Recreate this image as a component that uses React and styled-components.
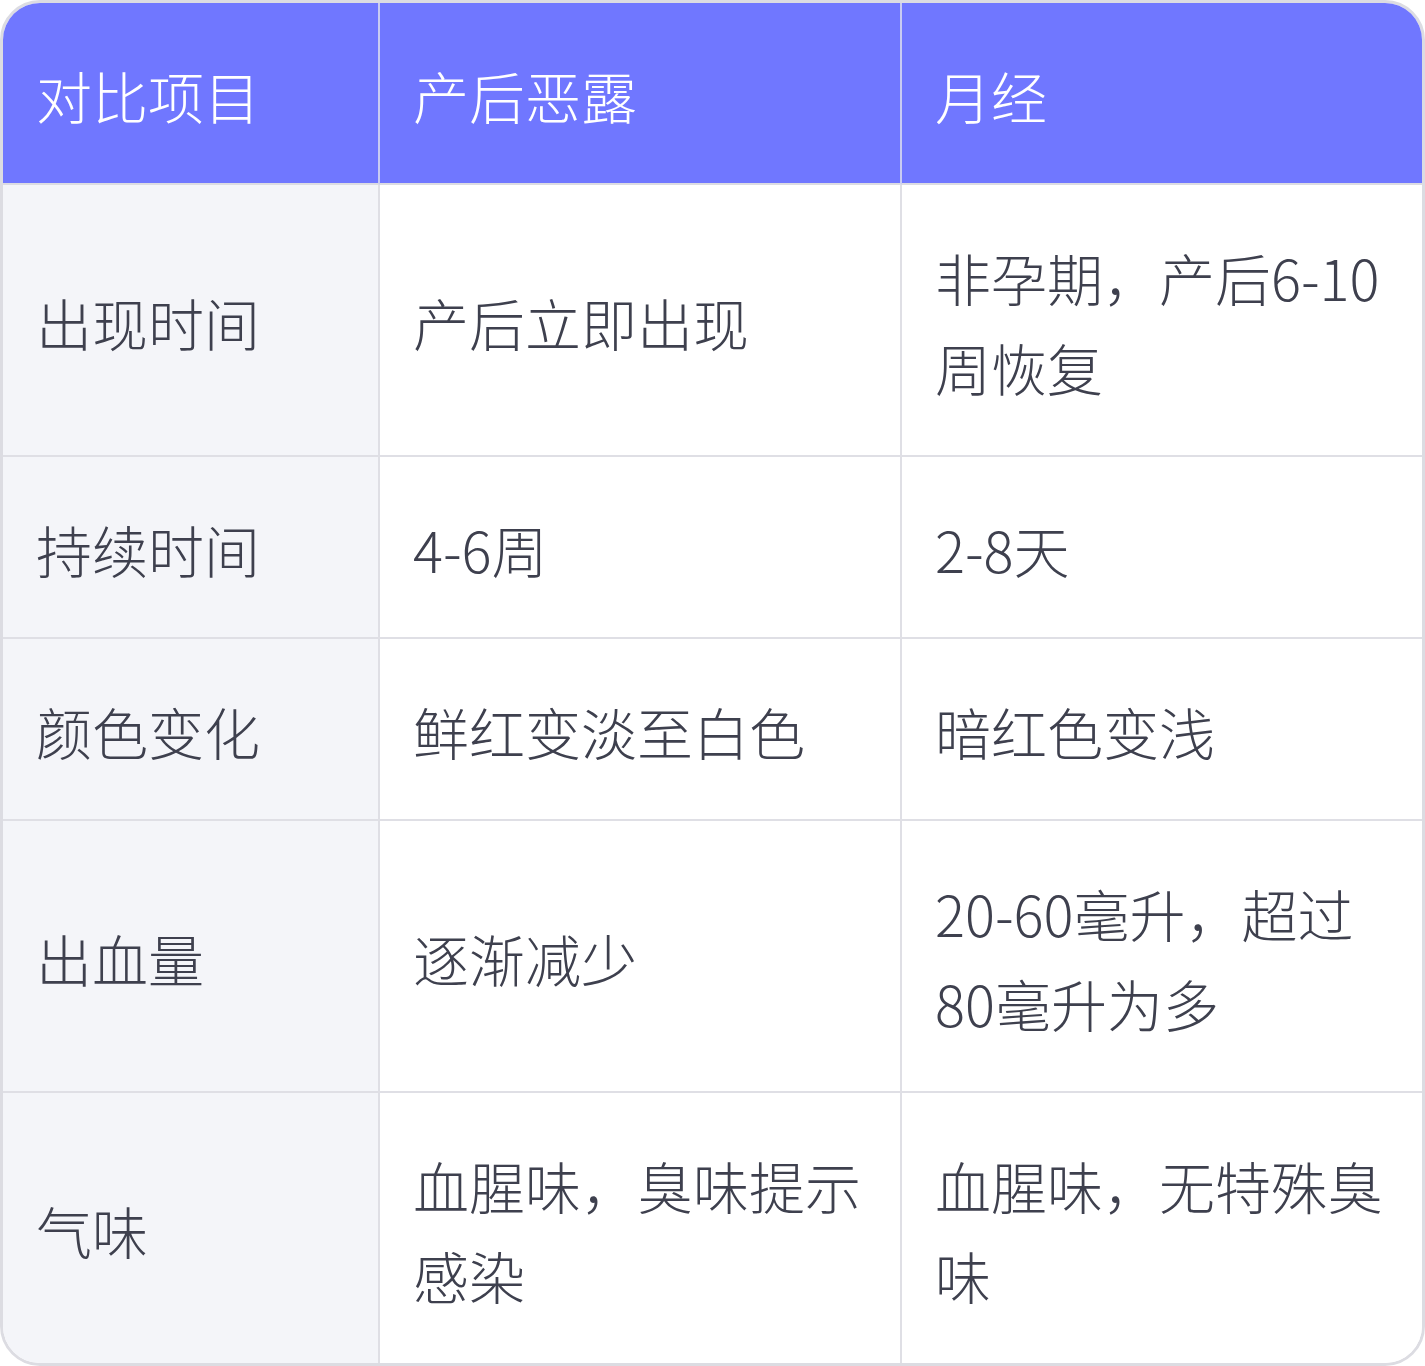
import React from 'react';
import styled, {createGlobalStyle} from 'styled-components';

const GlobalStyle = createGlobalStyle`
	html, body {
		margin: 0;
		padding: 0;
		background: #ffffff;
	}
	body {
		font-family: "Noto Sans CJK SC", "Noto Sans", sans-serif;
	}
`;

const TableWrapper = styled.div`
	width: 1425px;
	box-sizing: border-box;
	border: 3px solid #dcdce2;
	border-radius: 40px;
	overflow: hidden;
	background: #ffffff;
`;

const Grid = styled.div`
	display: grid;
	grid-template-columns: 377px 522px 1fr;
`;

const Cell = styled.div`
	box-sizing: border-box;
	display: flex;
	align-items: center;
	padding: 47px 30px 43px 33px;
	font-family: "Noto Sans CJK SC Light", "Noto Sans CJK SC DemiLight", "Noto Sans CJK SC", sans-serif;
	font-size: 56px;
	font-weight: 300;
	line-height: 90px;
	color: #3e404e;
	background: ${props => props.label ? '#f4f5f9' : '#ffffff'};
	border-right: ${props => props.last ? 'none' : '2px solid #dfdfe5'};
	border-bottom: ${props => props.bottom ? 'none' : '2px solid #dfdfe5'};
`;

const HeadCell = styled(Cell)`
	background: #7077ff;
	color: #ffffff;
	border-right: ${props => props.last ? 'none' : '2px solid #c9cbf2'};
	border-bottom: 2px solid #dcdce2;
`;

const header = ['对比项目', '产后恶露', '月经'];

const rows = [
	['出现时间', '产后立即出现', '非孕期，产后6-10周恢复'],
	['持续时间', '4-6周', '2-8天'],
	['颜色变化', '鲜红变淡至白色', '暗红色变浅'],
	['出血量', '逐渐减少', '20-60毫升，超过80毫升为多'],
	['气味', '血腥味，臭味提示感染', '血腥味，无特殊臭味'],
];

const App = () => {
	return (
		<>
			<GlobalStyle/>
			<TableWrapper>
				<Grid>
					{header.map((h, i) => (
						<HeadCell key={h} last={i === 2}>{h}</HeadCell>
					))}
					{rows.map((row, r) => row.map((text, c) => (
						<Cell key={r + '-' + c}
						      label={c === 0}
						      last={c === 2}
						      bottom={r === rows.length - 1}>
							<span>{text}</span>
						</Cell>
					)))}
				</Grid>
			</TableWrapper>
		</>
	);
};

export default App;
